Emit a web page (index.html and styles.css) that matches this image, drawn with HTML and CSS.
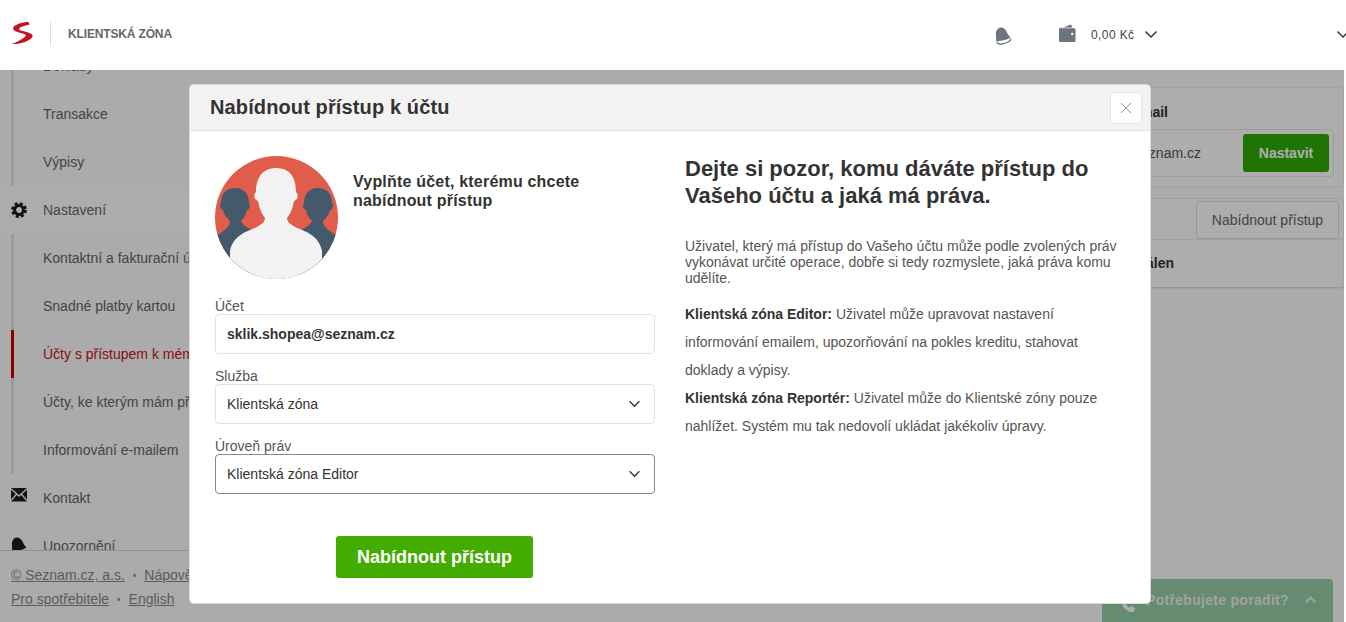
FILE: index.html
```html
<!DOCTYPE html>
<html lang="cs">
<head>
<meta charset="utf-8">
<title>Klientská zóna</title>
<link rel="stylesheet" href="styles.css">
</head>
<body>
<header class="topbar">
  <div class="brand">
    <svg class="logo" viewBox="0 0 24 26"><path fill="#c4121f" d="M17 .8C11 1.500 1.500 3.500 1.200 7.500C1 11 8 12 13 13.500C15 14.300 15 15.500 13 17C10 19.500 4 22.500 0 24C8 24 19 21 21.500 16C22.500 12 12 11 8.500 9.500C6.500 8.500 7.500 7 10 6C13 5 15.500 4 18.500 3.500Z"/></svg>
    <span class="brand-name">KLIENTSKÁ ZÓNA</span>
  </div>
  <div class="top-actions">
    <svg class="top-bell" viewBox="0 0 18 20"><path fill="#6c757d" d="M6 1.500C9 1 11.500 3 12.500 5.500C13.500 8 15 10 16.500 11.500C13 14 7 15.500 2 15C2.500 12 1.500 9 2 6.500C2.500 4 4 2 6 1.500Z"/><path fill="none" stroke="#6c757d" stroke-width="1.300" d="M3 15.500C3 17.500 5 18.500 8 18C12 17.500 17 15 17 12.500"/></svg>
    <svg class="top-wallet" viewBox="0 0 18 18"><path fill="#6c757d" d="M1 5L13 .5L14.500 3.500H3.500L1 4.500Z"/><path fill="#6c757d" fill-rule="evenodd" d="M1 5.500C1 4.700 1.700 4.200 2.500 4.200H16C17 4.200 17.500 4.800 17.500 5.500V16.500C17.500 17.300 17 18 16 18H2.500C1.700 18 1 17.300 1 16.500ZM13 10a1.200 1.200 0 1 0 2.400 0a1.200 1.200 0 1 0-2.400 0Z"/></svg>
    <span class="credit">0,00 Kč</span>
    <svg class="chev-top" viewBox="0 0 14 9"><path d="M1.500 1.500L7 7L12.500 1.500"/></svg>
    <svg class="chev-top chev-edge" viewBox="0 0 14 9"><path d="M1.500 1.500L7 7L12.500 1.500"/></svg>
  </div>
</header>

<div class="stage">
  <aside class="sidebar">
    <nav class="nav">
      <div class="group">
        <a class="item">Doklady</a>
        <a class="item">Transakce</a>
        <a class="item">Výpisy</a>
      </div>
      <a class="item top current">
        <svg class="nav-icon" viewBox="0 0 16 16"><circle cx="8" cy="8" r="6.400" fill="none" stroke="#1c1c1c" stroke-width="3" stroke-dasharray="2.900 2.125"/><circle cx="8" cy="8" r="4.400" fill="none" stroke="#1c1c1c" stroke-width="3"/></svg>
        Nastavení</a>
      <div class="group">
        <a class="item">Kontaktní a fakturační údaje</a>
        <a class="item">Snadné platby kartou</a>
        <a class="item active">Účty s přístupem k mému účtu</a>
        <a class="item">Účty, ke kterým mám přístup</a>
        <a class="item">Informování e-mailem</a>
      </div>
      <a class="item top">
        <svg class="nav-icon mail" viewBox="0 0 16 14"><path fill="#1c1c1c" d="M0 0H16L8 7ZM0 1.800L4.800 6L0 11.500ZM16 1.800V11.500L11.200 6ZM5.800 7L8 9L10.200 7L16 13.500H0Z"/></svg>
        Kontakt</a>
      <a class="item top">
        <svg class="nav-icon bell" viewBox="0 0 18 20"><path fill="#1c1c1c" d="M6 1.500C9 1 11.500 3 12.500 5.500C13.500 8 15 10 16.500 11.500C13 14 7 15.500 2 15C2.500 12 1.500 9 2 6.500C2.500 4 4 2 6 1.500Z"/></svg>
        Upozornění</a>
    </nav>
    <footer class="foot">
      <p class="foot-line"><a>© Seznam.cz, a.s.</a><i>•</i><a>Nápověda</a></p>
      <p class="foot-line"><a>Pro spotřebitele</a><i>•</i><a>English</a></p>
    </footer>
  </aside>
  <main class="main">
    <section class="panel">
      <h3 class="panel-title">Informování e-mail</h3>
      <div class="field-row">
        <span>sklik.shopea@seznam.cz</span>
        <a class="btn-set">Nastavit</a>
      </div>
    </section>
    <section class="panel-list">
      <div class="list-head"><a class="btn-outline">Nabídnout přístup</a></div>
      <div class="list-row">Schválen</div>
    </section>
  </main>
  <div class="chat">
    <svg class="chat-phone" viewBox="0 0 18 18"><path fill="#fff" d="M1 3L5 .5L8 5L6 7C7 9 9 11 11 12L13 10L17.500 13L15 17C8 17.500 .5 10 1 3Z"/></svg>
    <span>Potřebujete poradit?</span>
    <svg class="chat-chev" viewBox="0 0 14 9"><path d="M2 7.500L7 2.500L12 7.500"/></svg>
  </div>
</div>

<div class="overlay">
  <div class="modal">
    <div class="modal-head">
      <h2 class="modal-title">Nabídnout přístup k účtu</h2>
      <button class="close" type="button"><svg viewBox="0 0 12 12"><path d="M1 1L11 11M11 1L1 11"/></svg></button>
    </div>
    <div class="modal-body">
      <div class="col">
        <div class="intro">
          <svg class="avatar" viewBox="0 0 123 123">
            <defs><clipPath id="round"><circle cx="61.500" cy="61.500" r="61.500"/></clipPath></defs>
            <g clip-path="url(#round)">
              <rect width="123" height="123" fill="#e05d4b"/>
              <path fill="#44596b" d="M20 32C10 32 6 39 6 47C4 49 5 53 8 54C9 59 12 62 15 65C15 70 10 75 0 80V123H40V75C33 73 27 68 26 65C29 62 31 59 32 54C35 53 36 49 34 47C34 39 30 32 20 32Z"/>
              <path fill="#44596b" d="M103 32C113 32 117 39 117 47C119 49 118 53 115 54C114 59 111 62 108 65C108 70 113 75 123 80V123H83V75C90 73 96 68 97 65C94 62 92 59 91 54C88 53 87 49 89 47C89 39 93 32 103 32Z"/>
              <path fill="#f2f2f2" d="M61.500 12C49 12 41 20 41 36C38 39 39 44 43 45C44 52 47 58 50 62C50 66 46 69 40 72C30 76 18 80 15 95V103L28 123H95L107 103V95C104 80 92 76 82 72C76 69 72 66 72 62C75 58 78 52 79 45C83 44 84 39 81 36C81 20 74 12 61.500 12Z"/>
            </g>
          </svg>
          <p class="intro-text">Vyplňte účet, kterému chcete nabídnout přístup</p>
        </div>
        <label class="label first">Účet</label>
        <div class="control account">sklik.shopea@seznam.cz</div>
        <label class="label">Služba</label>
        <div class="control">Klientská zóna<svg class="chev" viewBox="0 0 14 9"><path d="M1.500 1.500L7 7L12.500 1.500"/></svg></div>
        <label class="label">Úroveň práv</label>
        <div class="control focused">Klientská zóna Editor<svg class="chev" viewBox="0 0 14 9"><path d="M1.500 1.500L7 7L12.500 1.500"/></svg></div>
        <div class="submit-row"><button class="submit" type="button">Nabídnout přístup</button></div>
      </div>
      <div class="col">
        <h2 class="warn">Dejte si pozor, komu dáváte přístup do Vašeho účtu a jaká má práva.</h2>
        <p class="lead">Uživatel, který má přístup do Vašeho účtu může podle zvolených práv vykonávat určité operace, dobře si tedy rozmyslete, jaká práva komu udělíte.</p>
        <p class="rights"><b>Klientská zóna Editor:</b> Uživatel může upravovat nastavení informování emailem, upozorňování na pokles kreditu, stahovat doklady a výpisy.</p>
        <p class="rights"><b>Klientská zóna Reportér:</b> Uživatel může do Klientské zóny pouze nahlížet. Systém mu tak nedovolí ukládat jakékoliv úpravy.</p>
      </div>
    </div>
  </div>
</div>
</body>
</html>
```
FILE: styles.css
```css
* { box-sizing: border-box; }
html, body { margin: 0; height: 622px; overflow: hidden; }
body { position: relative; background: #fff; font-family: "Liberation Sans", Arial, sans-serif; font-size: 14px; color: #333; }

.topbar { position: relative; z-index: 3; height: 70px; background: #fff; display: flex; justify-content: space-between; align-items: center; }
.brand { display: flex; align-items: center; padding-left: 12px; margin-top: -3px; }
.logo { width: 23px; height: 25px; }
.brand-name { margin-left: 15px; padding-left: 17px; border-left: 1px solid #ddd; height: 24px; line-height: 24px; font-size: 12px; font-weight: 700; letter-spacing: -.15px; color: #666; }
.top-actions { display: flex; align-items: center; width: 352px; height: 24px; }
.top-actions > * { flex: none; }
.top-bell { width: 18px; height: 20px; margin-top: 2px; margin-left: 0; }
.top-wallet { width: 18px; height: 18px; margin-left: 46px; margin-top: -4px; }
.credit { margin-left: 15px; font-size: 12px; color: #444; letter-spacing: .4px; white-space: nowrap; }
.chev-top { width: 14px; height: 9px; margin-left: 9px; margin-top: -2px; fill: none; stroke: #333; stroke-width: 1.500; }
.top-actions .chev-edge { margin-left: 178px; }

.stage { position: relative; height: 552px; overflow: hidden; display: flex; background: #fcfcfc; }
.sidebar { position: relative; width: 300px; flex: none; overflow: hidden; }
.nav { margin-top: -28px; }
.group { margin-left: 11px; border-left: 3px solid #e3e3e3; }
.item { display: flex; align-items: center; height: 48px; padding-left: 29px; color: #666; white-space: nowrap; }
.group .item.active { margin-left: -3px; padding-left: 29px; border-left: 3px solid #c00; color: #c9141f; }
.item.top { padding-left: 11px; }
.item.current { background: #fff; }
.nav-icon { width: 16px; height: 16px; margin-right: 16px; flex: none; }
.nav-icon.mail { height: 14px; margin-top: -6px; }
.nav-icon.bell { width: 18px; height: 20px; margin-left: -1px; margin-right: 15px; }
.foot { position: absolute; left: 0; right: 0; bottom: 0; height: 72px; background: #fcfcfc; border-top: 1px solid #d6d6d6; padding: 14px 0 0 11px; }
.foot-line { margin: 0 0 4px; height: 20px; line-height: 20px; color: #888; white-space: nowrap; }
.foot-line a { text-decoration: underline; }
.foot-line i { font-style: normal; font-size: 10px; margin: 0 8px; vertical-align: 1px; }

.main { flex: 1; padding: 17px 2px 0 0; }
.panel { height: 100px; border: 1px solid #eee; border-radius: 4px; padding: 0 9px 0 180px; background: #fff; }
.panel-title { margin: 16px 0 0; font-size: 14px; line-height: 16px; height: 25px; text-align: right; padding-right: 166px; color: #333; }
.field-row { height: 48px; border: 1px solid #e8e8e8; border-radius: 4px; display: flex; align-items: center; justify-content: flex-end; gap: 42px; padding-right: 4px; color: #555; }
.btn-set { width: 86px; height: 38px; line-height: 38px; text-align: center; background: #2eac06; border-radius: 3px; font-weight: 700; color: #fff; }
.panel-list { margin-top: 11px; border: 1px solid #eee; border-radius: 4px; background: #fff; }
.list-head { display: flex; justify-content: flex-end; padding: 2px 4px 0 0; border-bottom: 1px solid #eee; }
.btn-outline { width: 143px; height: 38px; line-height: 36px; text-align: center; border: 1px solid #ddd; border-radius: 3px; color: #666; }
.list-row { height: 48px; line-height: 47px; border-bottom: 1px solid #ddd; padding-left: 350px; font-weight: 700; text-align: right; padding-right: 169px; }

.chat { position: absolute; left: 1102px; top: 509px; width: 231px; height: 43px; background: #96cea5; border-radius: 4px 4px 0 0; display: flex; align-items: center; color: #fff; font-weight: 700; padding: 0 0 2px 18px; }
.chat span { margin-left: 10px; color: #eee; letter-spacing: .3px; }
.chat-phone { width: 16px; height: 18px; margin-top: 10px; }
.chat-chev { width: 13px; height: 9px; margin-left: 15px; fill: none; stroke: #eee; stroke-width: 2.500; }

.overlay { position: absolute; top: 70px; left: 0; right: 2px; bottom: 0; z-index: 2; background: rgba(0,0,0,.32); }
.modal { margin: 15px 0 0 190px; width: 960px; height: 518px; background: #fff; border-radius: 4px; overflow: hidden; box-shadow: 0 0 0 1px #dcdcdc; }
.modal-head { height: 46px; background: #f3f3f3; border-bottom: 1px solid #e2e2e2; display: flex; justify-content: space-between; padding: 7px 8px 0 20px; }
.modal-title { margin: 0; font-size: 20px; line-height: 31px; font-weight: 700; color: #333; letter-spacing: .12px; }
.close { width: 32px; height: 32px; padding: 9px; border: 1px solid #e5e5e5; border-radius: 3px; background: #fff; }
.close svg { display: block; width: 12px; height: 12px; fill: none; stroke: #999; stroke-width: 1; }
.modal-body { display: grid; grid-template-columns: 440px 440px; column-gap: 30px; padding: 25px 25px 0; }
.intro { display: flex; gap: 15px; height: 123px; }
.avatar { width: 123px; height: 123px; flex: none; }
.intro-text { margin: 16px 0 0; width: 240px; font-size: 16px; line-height: 19px; font-weight: 700; letter-spacing: .2px; color: #333; }
.label { display: block; height: 16px; line-height: 16px; margin-top: 14px; color: #555; }
.label.first { margin-top: 19px; }
.control { height: 40px; border: 1px solid #e3e3e3; border-radius: 4px; display: flex; align-items: center; justify-content: space-between; padding: 0 13px 0 11px; color: #333; }
.control.account { font-weight: 700; }
.control.focused { border-color: #888; }
.chev { width: 13px; height: 8px; fill: none; stroke: #333; stroke-width: 1.500; }
.submit-row { display: flex; margin: 42px 0 0 121px; }
.submit { width: 197px; height: 42px; border: 0; border-radius: 3px; background: #43ac00; color: #fff; font: 700 18px "Liberation Sans", Arial, sans-serif; }
.warn { margin: -1px 0 0; font-size: 22px; line-height: 27px; font-weight: 700; color: #333; }
.lead { margin: 29px 0 0; line-height: 16px; color: #555; }
.rights { margin: 0; line-height: 28px; color: #555; }
.lead + .rights { margin-top: 14px; }
.rights b { color: #333; }
```
